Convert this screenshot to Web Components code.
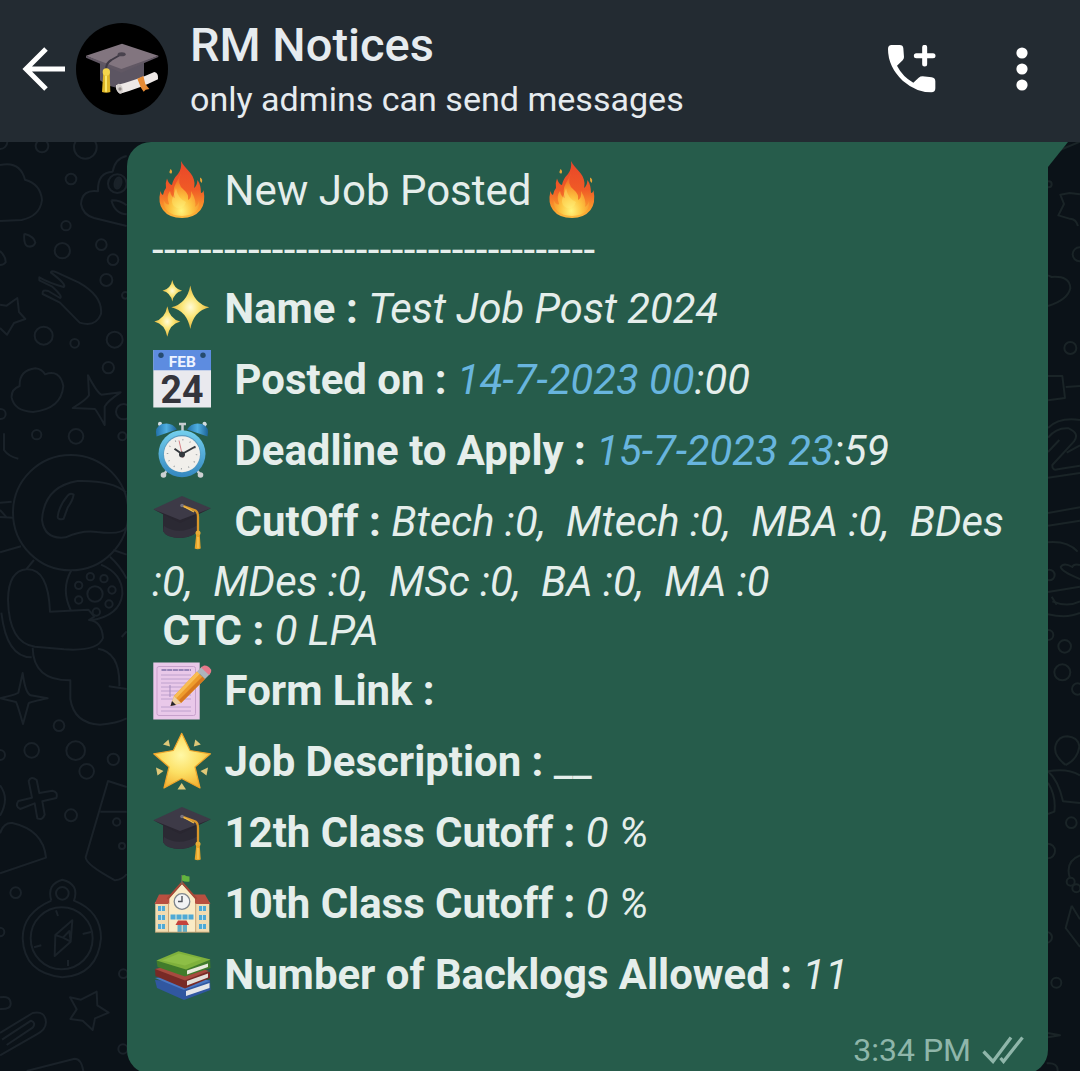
<!DOCTYPE html>
<html lang="en">
<head>
<meta charset="utf-8">
<title>RM Notices</title>
<style>
html,body{margin:0;height:100%;overflow:hidden;background:#0b1218}
body{font-family:Roboto,"Liberation Sans",sans-serif}
message-line b{font-size:41.9px}
message-line i{font-size:41.75px}
</style>
</head>
<body>
<chat-screen>
  <chat-header slot="header"><span slot="title">RM Notices</span><span slot="subtitle">only admins can send messages</span></chat-header>
  <message-bubble>
    <message-line icon="fire">New Job Posted <emoji-icon name="fire"></emoji-icon></message-line>
    <message-line kind="rule">-------------------------------------</message-line>
    <message-line icon="sparkles"><b>Name :</b> <i>Test Job Post 2024</i></message-line>
    <message-line icon="calendar" wide><b>Posted on :</b> <i><date-link>14-7-2023 00</date-link>:00</i></message-line>
    <message-line icon="clock" wide><b>Deadline to Apply :</b> <i><date-link>15-7-2023 23</date-link>:59</i></message-line>
    <message-line icon="cap" wide><b>CutOff :</b> <i>Btech :0,  Mtech :0,  MBA :0,  BDes</i></message-line>
    <message-line kind="text"><i>:0,  MDes :0,  MSc :0,  BA :0,  MA :0</i></message-line>
    <message-line kind="text"> <b>CTC :</b> <i>0 LPA</i></message-line>
    <message-line icon="memo"><b>Form Link :</b></message-line>
    <message-line icon="star"><b>Job Description :</b> __</message-line>
    <message-line icon="cap"><b>12th Class Cutoff :</b> <i>0 %</i></message-line>
    <message-line icon="school"><b>10th Class Cutoff :</b> <i>0 %</i></message-line>
    <message-line icon="books"><b>Number of Backlogs Allowed :</b> <i>11</i></message-line>
    <message-status slot="status">3:34 PM</message-status>
  </message-bubble>
</chat-screen>
<script>
const define = (name, html, setup) => customElements.define(name, class extends HTMLElement {
  constructor() {
    super();
    this.attachShadow({mode: 'open'}).innerHTML = html;
  }
  connectedCallback() { if (setup) setup(this, this.shadowRoot); }
});

const CAP = `<path d="M11 20V39Q14 46 29 46Q43 45 46 37V20Z" fill="#2b2933"/><path d="M12 34Q27 44 46 33V37Q43 45 29 46Q14 46 11 39Z" fill="#34313d"/>
<path d="M1.3 17.3L30 4L59 16.3L28 30Z" fill="#3d3a47"/><path d="M1.3 17.3L28 28L59 16.3L28 31Z" fill="#292630"/>
<path d="M30 13.5L43.5 18.5Q46 20 46 25V42" fill="none" stroke="#d9962a" stroke-width="2.3"/><path d="M30 13.5L42 20" stroke="#f0bd4c" stroke-width="1.3"/><circle cx="30" cy="13.5" r="1.8" fill="#77737f"/><circle cx="46" cy="41" r="2.5" fill="#e9ad37"/><path d="M44.3 42h3.4l1 14.5q-3 1.5-6 0z" fill="#e9a52a"/><path d="M46 45v11" stroke="#ffd466"/>`;
const spark = (x,y,a,b) => `<path d="M${x} ${y-b}Q${x+a*.17} ${y-b*.17} ${x+a} ${y}Q${x+a*.17} ${y+b*.17} ${x} ${y+b}Q${x-a*.17} ${y+b*.17} ${x-a} ${y}Q${x-a*.17} ${y-b*.17} ${x} ${y-b}Z" fill="url(#s)"/>`;
const win = (x,y) => `<path d="M${x} ${y}h7v5h-7z" fill="#4fa9d5"/><path d="M${x+3.5} ${y}v5" stroke="#d5f0f8" stroke-width=".8"/>`;
const EMOJI = {
fire: `<defs><linearGradient id="f" x2="0" y2="1"><stop offset="0" stop-color="#e8452a"/><stop offset=".5" stop-color="#f05a26"/><stop offset=".85" stop-color="#fb9d2c"/><stop offset="1" stop-color="#fdbb3e"/></linearGradient><radialGradient id="g" cx=".5" cy=".88" r=".75"><stop offset="0" stop-color="#fff37a"/><stop offset=".4" stop-color="#fdc440"/><stop offset=".8" stop-color="#f78a2a"/><stop offset="1" stop-color="#f2642a"/></radialGradient></defs>
<path d="M29 1C32 8 42 13 42.500 23Q42.500 26 42 28Q45 26 45.500 20Q49 25 49 33Q51 33 51.500 30Q54 43 48.500 50Q42 58 30 58Q17 58 11 50Q5.500 43 8.500 31Q9 34 11 35Q11.500 31 14 28Q13 23 15 18.500Q17 25 20 25Q21 19 26 14Q30 9 29 1Z" fill="url(#f)"/>
<path d="M29 13Q24 24 32 30Q37 34 36 40Q40 38 39 31Q45 41 43 47Q47 44 47 40Q49 55 30 56Q11 55 11.500 40Q15 46 17 44Q14 36 18 31Q19 37 23 38Q20 30 24 23Q27 18 29 13Z" fill="url(#g)"/><path d="M24 28Q26 39 34 42Q32 49 25 48Q19 45 20 40" fill="#fff07c" opacity=".35"/>
<path d="M18.500 9Q21 11 19.500 13.500Q17 14 17.500 11.500ZM48 17.500Q51.500 19 49.500 23Q47.500 21 48 17.500Z" fill="#e9a335"/>`,
sparkles: `<defs><radialGradient id="s"><stop offset="0" stop-color="#fffbd6"/><stop offset=".45" stop-color="#fbe679"/><stop offset="1" stop-color="#e6b83d"/></radialGradient></defs>${spark(38.3,28.2,19,21.8)}${spark(20.3,11.8,9.8,10.8)}${spark(15.3,42.5,13,15.3)}`,
calendar: `<path d="M1.300 0H59V57.600H1.300Z" fill="#e9e9ee"/><path d="M1.300 0H59V20.200H1.300Z" fill="#5d8ce0"/><circle cx="9" cy="5.200" r="2.700" fill="#264b6f"/><circle cx="51" cy="5.200" r="2.700" fill="#264b6f"/><text x="30.300" y="17.300" text-anchor="middle" font-size="14.300" font-weight="700" fill="#eef3ff" textLength="27" lengthAdjust="spacingAndGlyphs">FEB</text><text x="30" y="52.700" text-anchor="middle" font-size="38" font-weight="700" fill="#34343c" textLength="43" lengthAdjust="spacingAndGlyphs">24</text>`,
clock: `<defs><linearGradient id="c" x2="0" y2="1"><stop offset="0" stop-color="#74d0ee"/><stop offset="1" stop-color="#3487c0"/></linearGradient><linearGradient id="b"><stop offset="0" stop-color="#2170aa"/><stop offset=".5" stop-color="#4faee0"/><stop offset="1" stop-color="#1c6296"/></linearGradient></defs>
<path d="M16 48L11.500 54M44 48L48.500 54M27 3h7M30.500 3v7M9 6L7 2.500M52 6L54 2.500" stroke="#c7ccd0" stroke-width="2.500"/><circle cx="11.500" cy="54" r="2.800" fill="#cdd0d2"/><circle cx="48.500" cy="54" r="2.800" fill="#cdd0d2"/><circle cx="8" cy="2.800" r="2" fill="#d2dce0"/><circle cx="52.500" cy="2.800" r="2" fill="#d2dce0"/>
<path d="M4.500 15.500Q2 6 10 3Q20 .5 25 8.500Z" fill="url(#b)"/><path d="M55.500 15.500Q58 6 50 3Q40 .5 35 8.500Z" fill="url(#b)"/><circle cx="30" cy="32.800" r="23.500" fill="url(#c)"/><circle cx="30" cy="32.800" r="18.700" fill="#5a9bc0"/><circle cx="30" cy="33.200" r="18" fill="#f1efeb"/><circle cx="30" cy="33.200" r="14.500" fill="none" stroke="#9ba0a3" stroke-width="1.500" stroke-dasharray="1 6.590"/><path d="M30 33L22.500 27.800M30 33L43.500 25.500" stroke="#34383d" stroke-width="2"/><path d="M31 37L27 19.500" stroke="#d17379" stroke-width=".9"/><circle cx="30" cy="33.500" r="3" fill="#34383d"/>`,
cap: CAP,
memo: `<path d="M1.300 1.500H47.700V58.500H1.300Z" fill="#e9c8e9"/><rect x="5" y="5.500" width="38.500" height="49" rx="2" fill="none" stroke="#c7a1cc"/><path d="M9.500 9H39" stroke="#7d6da7" stroke-width="1.400" stroke-dasharray="5 .7"/><path d="M9 14H39M9 18H39M9 22H39M9 26H39M9 30H39M9 34H39M9 38H39M9 46H39M9 50H39" stroke="#b398c5" stroke-width=".8"/><path d="M18 24V36" stroke="#a48bbd"/>
<path d="M18.500 45L22 35L45 10.500L53 18L29 42Z" fill="#ee9c2d"/><path d="M22 35L45 10.500L47.600 13L24.500 37Z" fill="#f8bd54"/><path d="M29 42L51 20L53 18L50.500 15.500L27 39Z" fill="#d6781e"/><path d="M18.500 45L22 35L29 42Z" fill="#edd0a3"/><path d="M18.500 45L20 40L24 44Z" fill="#25232b"/><path d="M45 10.500L50 5.500L58 13L53 18Z" fill="#aeb4bb"/><path d="M49 6.500L52 4.500Q56 4 59 8.500Q60 11 57 14Z" fill="#e7798b"/>`,
star: `<defs><radialGradient id="s" cx=".48" cy=".4" r=".65"><stop offset="0" stop-color="#fff8a6"/><stop offset=".5" stop-color="#fce065"/><stop offset="1" stop-color="#f3ae2d"/></radialGradient></defs><path d="M29.700 1.300L38 18.500L58.500 21.800L43 35L48 56L29.700 46.500L12 56L17 35L1.700 21.800L21.300 18.500Z" fill="url(#s)" stroke="#efa52b" stroke-width="1.200" stroke-linejoin="round"/><path d="M11 12.500L16.500 7.500L18 14.500ZM48.800 12.500L43.300 7.500L41.800 14.500ZM4 35.500L11.500 39L5.500 43.500ZM56 35.500L48.500 39L54.500 43.500ZM29.700 51L34 57.500H25.500Z" fill="#dfc878"/>`,
school: `<path d="M3.300 28H57.300V58.200H3.300Z" fill="#f1dbb0"/><path d="M7 20.500H53L58.500 30H2.500Z" fill="#b84f40"/><path d="M17.300 24L30 10L43 24V58H17.300Z" fill="#faebc6"/><path d="M15.500 25L30 8.500L44.500 25" stroke="#a74837" stroke-width="2" fill="none"/><path d="M29.800 1V10" stroke="#6b705c" stroke-width="1.200"/><path d="M30 1.500Q33 .500 34 2L37.500 2.500V7.500Q34 8.500 30 6.500Z" fill="#63b33e"/><circle cx="30" cy="27.500" r="7.800" fill="#f2f3f4" stroke="#7d858d" stroke-width="1.300"/><path d="M30 22V27.500H26" stroke="#50545c" stroke-width="1.400" fill="none"/>
${[32,41,50].map(y=>win(6,y)+win(47,y)).join('')}<path d="M18.500 40.500H41.500V45.500H18.500Z" fill="#4fa9d5"/><path d="M24 40V46M30 40V46M36 40V46" stroke="#e2ead9"/><path d="M25.500 50H35V58H25.500Z" fill="#64acc5"/><path d="M30.200 50V58" stroke="#f5e8c8"/><path d="M26 46.500H34.500L37 51H23.500Z" fill="#c4433c"/><path d="M3 58.200H57.500M16.500 29V58M43.700 29V58" stroke="#c0996a" stroke-width=".8"/>`,
books: `<path d="M3 35L5 43L32 55L58.500 45L58 35L30 37Z" fill="#3157a0"/><path d="M34 46L57.500 38V43L34 51Z" fill="#e5e5e8"/><path d="M3 33L32 45L58 36L35 29Z" fill="#4a77c3"/><path d="M3 24L3.500 31L33 43.500L58 33V27L29 26Z" fill="#782a26"/><path d="M35 36L56 28.500V32.500L35 40.500Z" fill="#e2ded9"/><path d="M3 24L33 35.500L57 26L30 18Z" fill="#a74a3f"/><path d="M4.500 15.500L5.500 22L33 31.500L58.500 23L58 14Z" fill="#417b2b"/><path d="M35 25.500L56 18.500V22L35 29.500Z" fill="#e9eadd"/><path d="M4.500 15.500L26.500 6.300L58.500 14.500L34 24.500Z" fill="#7fb13c"/><path d="M10 15.500L27 8.500L50 14L33 20.500Z" fill="#96c64c" opacity=".6"/>`
};

define('emoji-icon', `<style>:host{display:inline-block;width:60px;height:60px;flex:none;vertical-align:-15.5px}svg{display:block;overflow:visible}</style><svg width="60" height="60" viewBox="0 0 60 60"></svg>`,
  (el, root) => { root.querySelector('svg').innerHTML = EMOJI[el.getAttribute('name')]; });

define('date-link', `<style>:host{display:inline;color:#68b5de}</style><slot></slot>`);

define('message-line', `<style>
:host{display:flex;align-items:center;height:71px;white-space:pre}
:host([kind]){height:49px}
:host([kind=rule]){letter-spacing:.38px;line-height:49px;height:48px}
.text{flex:none;margin-left:12.6px}
:host([wide]) .text{margin-left:22.6px}
:host([kind]) .text{margin-left:0}
</style><div class="text"><slot></slot></div>`,
  (el, root) => {
    const icon = el.getAttribute('icon');
    if (icon && !root.querySelector('emoji-icon')) {
      const e = document.createElement('emoji-icon');
      e.setAttribute('name', icon);
      root.querySelector('.text').before(e);
    }
  });

define('message-status', `<style>:host{display:flex;align-items:center;gap:11px;font-size:32px;line-height:38px;color:#8fb6aa}svg{display:block}</style><slot></slot>
<svg width="42" height="28" viewBox="0 0 42 28" fill="none" stroke="currentColor" stroke-width="3.300"><path d="M1.500 15.500L11 25.500L29 1.500M18.500 22L21.500 25.500L40.500 1.500"/></svg>`);

define('message-bubble', `<style>
:host{display:grid;grid-template-columns:921px 20px;height:932px;color:#e5eeeb;font-size:42px;line-height:49px}
.body{background:#265c4b;border-radius:24px 0 24px 24px;padding:12px 24px 0 25px;box-sizing:border-box;display:flex;flex-direction:column}
.tail{width:20px;height:25px;background:#265c4b;clip-path:polygon(0 0,100% 0,0 100%)}
.status{display:flex;justify-content:flex-end;margin-top:21px}
</style><div class="body"><slot></slot><div class="status"><slot name="status"></slot></div></div><div class="tail"></div>`);

define('chat-header', `<style>
:host{display:flex;align-items:center;height:142px;box-sizing:border-box;padding:0 52px 5px 22px;background:#232b32;color:#e6ebef}
svg{display:block;flex:none}
.avatar{margin-left:10.500px}
.names{margin-left:22.500px;flex:1;display:flex;flex-direction:column}
.title{font-size:47px;line-height:55px;font-weight:500}
.sub{font-size:34.050px;line-height:41px;margin-top:7px}
.names{margin-top:-1px}
.more{margin-left:80px}
</style>
<svg width="43" height="44" viewBox="0 0 43 44" fill="none" stroke="#fff" stroke-width="5"><path d="M24 2L4 22L24 42M4 22H43"/></svg>
<svg class="avatar" width="92" height="92" viewBox="0 0 276 276"><circle cx="138" cy="138" r="138"/><path d="M72 120V172Q110 204 170 193Q199 190 204 176V115Z" fill="#5c5562"/><path d="M30 98L138 62L247 98L136 145Z" fill="#82757f"/><path d="M30 98L136 138L247 98V102L136 149L30 104Z" fill="#615864"/><path d="M137 93L106 111Q91 119 90 137" fill="none" stroke="#3e3944" stroke-width="6"/><ellipse cx="137" cy="94" rx="12" ry="6" fill="#49434e"/><path d="M82 147L78 207Q91 212 103 207L101 147Z" fill="#dfb729"/><circle cx="91" cy="147" r="11" fill="#f4d54b"/><path d="M90 158V206" stroke="#fff078" stroke-width="5"/>
<path d="M120 187Q180 172 235 147Q248 149 246 169Q190 197 132 212Q118 206 120 187Z" fill="#eee9e7"/><ellipse cx="131" cy="197" rx="9" ry="15" transform="rotate(-18 131 197)" fill="#d4cecb"/><circle cx="132" cy="198" r="5" fill="#948d8b"/><path d="M184 167L202 159L208 183L220 198L209 200L203 206L195 194Z" fill="#e68b35"/></svg>
<div class="names"><div class="title"><slot name="title"></slot></div><div class="sub"><slot name="subtitle"></slot></div></div>
<svg width="48" height="48" viewBox="144 134 144 144" fill="#fff"><path d="M155 134H179Q189 134 190 144L192 170Q192 176 188 180L171 196Q188 229 220 247L236 232Q241 228 248 228L275 231Q286 233 286 243V264Q286 276 274 276Q229 276 188 241Q144 199 144 146Q144 134 155 134Z"/><path d="M254 141V191M229 166H279" stroke="#fff" stroke-width="15" stroke-linecap="round"/></svg>
<svg class="more" width="12" height="44" viewBox="0 0 12 44" fill="#fff"><circle cx="6" cy="6" r="5.600"/><circle cx="6" cy="22" r="5.600"/><circle cx="6" cy="38" r="5.600"/></svg>`);

const ring = s => s.split(' ').map(c => { const [x,y,r] = c.split(','); return `<circle cx="${x}" cy="${y}" r="${r}"/>`; }).join('');
define('chat-wallpaper', `<style>:host{display:block;background:#0b1218;overflow:hidden}svg{display:block}</style>
<svg width="1080" height="929" viewBox="0 0 1080 929" fill="none" stroke="#1a2229" stroke-width="6" stroke-linejoin="round">
<g transform="translate(0 -2) scale(.33333)">${ring('126,18,19 256,22,34 213,117,16 198,257,14 187,332,23 304,314,16 339,359,16 319,420,18 131,587,27 224,610,13 344,599,24 325,683,17 110,884,14 228,889,22 371,815,23 367,889,12 2,822,15 352,131,28 0,5,22 376,466,10')}
<path d="M0 75Q60 62 75 119Q122 132 126 180Q120 228 65 240L0 243M380 48Q345 55 338 95Q292 97 294 154Q246 147 243 192Q248 224 282 234L380 258M334 181Q345 222 380 223M334 181Q360 180 380 196M73 281Q104 290 106 308Q100 323 83 319Q70 313 73 281M0 333Q18 350 17 367Q12 375 0 375"/><ellipse cx="354" cy="129" rx="10" ry="17" transform="rotate(15 354 129)" fill="#1a2229"/>
<path d="M118 412Q145 428 191 441Q202 435 153 398Q152 390 170 397L237 428Q309 469 303 522Q287 563 239 548L180 488L128 462Q126 447 145 453L180 474Q190 470 157 440L118 421ZM0 494L20 497L52 474L57 516L76 537L42 549L21 584L0 564M59 738Q57 691 106 685Q126 687 135 703Q180 687 190 738Q184 807 99 816Q43 813 35 773Q33 748 59 738ZM264 706Q291 758 304 764L362 757Q321 784 314 800L314 855Q292 816 285 807L218 804Q259 780 267 766ZM12 880L12 930Q25 949 55 956"/></g>
<g transform="translate(0 298) scale(.33333)">${ring('285,462,23 271,410,11 312,416,11 336,450,11 327,492,11 236,436,11 236,480,11 289,516,11 177,857,16 95,931,22 227,932,28 340,958,17 0,945,15')}
<circle cx="212" cy="218" r="173"/><path d="M378 157Q335 120 232 123Q132 140 126 240Q134 300 197 292Q248 269 292 276Q367 285 378 263M203 167Q211 157 221 164Q219 180 203 203L191 236Q174 241 173 231Q176 199 203 167M0 188L35 185M0 231L40 233M0 210L20 232M0 337L63 319M102 360L78 389M24 480Q25 392 80 388Q145 385 150 515L265 509L283 530L267 540Q306 544 309 594Q293 635 192 628L105 620Q27 610 24 480M4 518Q20 653 95 652M98 623Q100 722 211 721V777Q222 850 300 854Q350 850 380 835M294 626Q361 637 358 739M326 739L380 747M214 391Q182 447 212 510M303 374Q369 402 367 463Q359 527 273 541M330 350Q362 379 380 416M340 330L380 344M365 591L380 574M68 699Q76 760 92 766L143 775Q91 786 86 790L69 852Q53 795 48 786L0 775Q51 763 55 758Z"/></g>
<g transform="translate(0 608) scale(.33333)">${ring('260,64,22 213,196,18 47,428,16 0,546,13 187,430,19 350,216,11 366,288,9 370,671,13 369,897,14 185,565,93')}
<path d="M86 93Q93 76 110 90L118 129L157 122Q175 125 169 144L127 154L134 194Q128 212 112 205L104 160L61 177Q44 169 55 153L96 143ZM0 106Q30 146 0 197M0 250Q11 216 37 219Q130 240 138 323L0 370M380 111L324 93L257 322Q257 344 345 391Q368 389 380 372M301 185H380M154 452Q139 403 187 389Q239 402 222 452Q303 484 303 565Q293 675 187 682Q72 670 68 565Q68 489 154 452M168 481L174 498M248 552L273 546M102 592L124 586M204 648L204 630M217 511L166 555L164 618L212 575ZM166 555L189 563L208 543L212 575L189 563M210 742L243 749L290 725L292 766L326 788L285 805L278 840L248 812L211 807L230 778ZM0 742Q31 736 32 760Q33 779 0 777M0 849L98 789Q136 781 138 817Q137 840 110 853L0 916M6 869L93 812Q109 819 98 833L20 885M80 963L224 926Q244 926 250 963"/></g>
<g transform="translate(1030 -2) scale(.33333)" stroke="#1a2427">${ring('56,133,9 149,343,21 121,624,18 58,1305,16')}
<path d="M90 30L150 5M150 163L119 159L91 164L102 192L85 226L118 236Q138 235 144 258M54 406L65 411Q120 407 121 445Q113 480 54 498M54 708H97L105 774L54 781M107 741L150 738M54 864Q87 831 150 840M54 893Q79 862 116 865Q150 880 132 904L67 975Q66 993 83 988L150 977M54 936L88 900M110 938L150 916M54 1013L150 999M54 1119L150 1102M54 1157L150 1142M54 1207Q112 1202 143 1235M150 1317Q95 1295 92 1281Q101 1266 127 1281Q131 1270 150 1275M54 1356L150 1340M65 1370L80 1394"/></g>
<g transform="translate(1030 458) scale(.33333)" stroke="#1a2427">${ring('55,105,15 104,139,19 97,217,24 143,267,17 124,668,16 53,753,22 50,1012,16 79,1148,15 122,845,12 139,865,12')}
<path d="M54 43Q112 56 150 39M67 4Q112 23 150 4M107 495Q68 465 77 435Q86 409 112 409Q145 412 148 440Q143 478 107 495M54 514Q112 503 150 526M54 514Q85 541 99 604L150 609M54 548Q79 588 73 635L54 642M150 766Q105 784 119 832M125 917L150 958M125 917L107 984L150 1041M54 1299L90 1306L54 1312M50 1390Q84 1387 83 1413"/></g>
</svg>`);

define('chat-screen', `<style>
:host{display:flex;flex-direction:column;width:1080px;height:1071px;overflow:hidden}
main{flex:1;display:grid;overflow:hidden;grid-template:929px/1080px}
main>*{grid-area:1/1}
.messages{padding-left:127px;z-index:1}
</style><slot name="header"></slot><main><chat-wallpaper></chat-wallpaper><div class="messages"><slot></slot></div></main>`);
</script>
</body>
</html>
